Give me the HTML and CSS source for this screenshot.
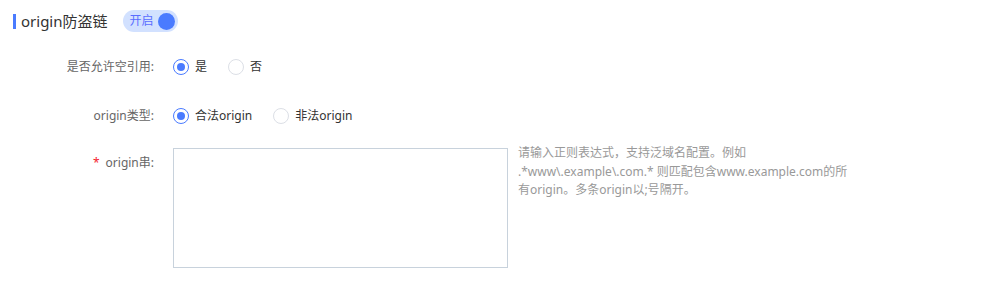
FILE: index.html
```html
<!DOCTYPE html>
<html lang="zh-CN">
<head>
<meta charset="utf-8">
<link rel="stylesheet" href="styles.css">
</head>
<body>
<div class="page">
  <div class="header">
    <span class="bar"></span>
    <span class="title">origin防盗链</span>
    <span class="switch"><span class="switch-text">开启</span><span class="knob"></span></span>
  </div>
  <div class="form">
    <div class="row row-1">
      <div class="label">是否允许空引用:</div>
      <div class="control">
        <label class="radio checked"><span class="dot"></span><span class="rtext">是</span></label>
        <label class="radio"><span class="dot"></span><span class="rtext">否</span></label>
      </div>
    </div>
    <div class="row row-2">
      <div class="label">origin类型:</div>
      <div class="control">
        <label class="radio checked"><span class="dot"></span><span class="rtext">合法origin</span></label>
        <label class="radio"><span class="dot"></span><span class="rtext">非法origin</span></label>
      </div>
    </div>
    <div class="row row-3">
      <div class="label label-top"><span class="req">*</span>origin串:</div>
      <div class="control control-top">
        <div class="textarea"></div>
        <div class="help">
          <span class="line">请输入正则表达式，支持泛域名配置。例如</span>
          <span class="line">.*www\.example\.com.* 则匹配包含www.example.com的所</span>
          <span class="line">有origin。多条origin以;号隔开。</span>
        </div>
      </div>
    </div>
  </div>
</div>
</body>
</html>
```
FILE: styles.css
```css
html, body {
  margin: 0;
  padding: 0;
  background: #fff;
}
body {
  font-family: "Noto Sans", "Noto Sans CJK SC", sans-serif;
  font-size: 12px;
  color: #333;
}
.page {
  width: 1000px;
  height: 285px;
  overflow: hidden;
}
.header {
  display: flex;
  align-items: center;
  height: 22px;
  margin-top: 10px;
  padding-left: 13px;
}
.bar {
  width: 3px;
  height: 15px;
  background: #4a7bff;
  margin-right: 5px;
}
.title {
  font-size: 15px;
  color: #333;
  line-height: 22px;
}
.switch {
  display: flex;
  align-items: center;
  justify-content: space-between;
  width: 55px;
  height: 22px;
  box-sizing: border-box;
  padding: 0 3px 0 7px;
  margin-left: 15px;
  border-radius: 11px;
  background: #d2e1ff;
}
.switch-text {
  color: #5a6dff;
  font-size: 12px;
  line-height: 22px;
}
.knob {
  width: 17px;
  height: 17px;
  border-radius: 50%;
  background: #4a7bff;
}
.form {
  display: flex;
  flex-direction: column;
}
.row {
  display: flex;
  align-items: center;
}
.row-1 {
  margin-top: 23px;
  height: 24px;
}
.row-2 {
  margin-top: 25px;
  height: 24px;
}
.row-3 {
  margin-top: 20px;
  align-items: flex-start;
}
.label {
  width: 157px;
  box-sizing: border-box;
  padding-right: 3px;
  text-align: right;
  color: #666;
  font-size: 12px;
  line-height: 18px;
  flex: none;
}
.label-top {
  padding-top: 6px;
}
.req {
  color: #f5222d;
  margin-right: 6px;
}
.control {
  display: flex;
  align-items: center;
  margin-left: 16px;
}
.control-top {
  align-items: flex-start;
}
.radio {
  display: flex;
  align-items: center;
  margin-right: 21px;
  color: #333;
  line-height: 18px;
}
.dot {
  width: 16px;
  height: 16px;
  box-sizing: border-box;
  border-radius: 50%;
  border: 1px solid #dcdfe6;
  background: #fff;
  margin-right: 6px;
  position: relative;
  flex: none;
}
.radio.checked .dot {
  border-color: #4a7bff;
}
.radio.checked .dot::after {
  content: "";
  position: absolute;
  left: 3px;
  top: 3px;
  width: 8px;
  height: 8px;
  border-radius: 50%;
  background: #4a7bff;
}
.textarea {
  width: 335px;
  height: 120px;
  box-sizing: border-box;
  border: 1px solid #c8d2dc;
  background: #fff;
  flex: none;
}
.help {
  margin-left: 10px;
  margin-top: -4px;
  color: #999;
  font-size: 12px;
  line-height: 18.5px;
}
.line {
  display: block;
  white-space: nowrap;
}
```
